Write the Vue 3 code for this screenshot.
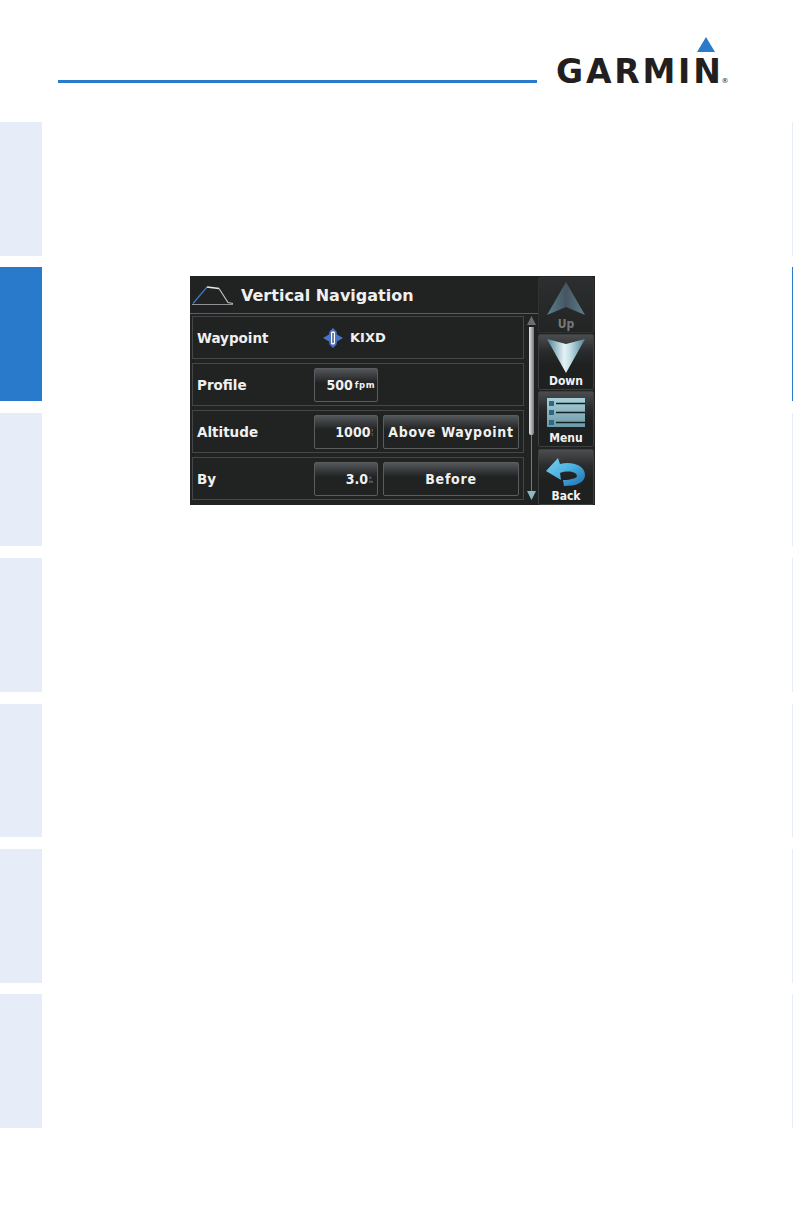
<script setup>
const tabs = [false, true, false, false, false, false, false]
const rows = [
  { label: 'Profile', value: '500', unit: 'fpm' },
  { label: 'Altitude', value: '1000', stack: ['f', 't'], wide: 'Above Waypoint' },
  { label: 'By', value: '3.0', stack: ['n', 'm'], wide: 'Before' }
]
</script>

<template>
  <div class="page">
    <header class="top">
      <div class="rule"></div>
      <div class="logo">
        <svg class="delta" width="18" height="15" viewBox="0 0 18 15"><path d="M9 0 18 15H0Z" fill="#2a7acb" /></svg>
        <div class="wordmark">GARMIN<span class="reg">®</span></div>
      </div>
    </header>
    <div class="body">
      <nav class="tabs left">
        <div v-for="(on, i) in tabs" :key="i" class="tab" :class="{ on }"></div>
      </nav>
      <main class="main">
        <section class="screen">
          <div class="content">
            <div class="title">
              <svg class="profile" width="42" height="24" viewBox="0 0 42 24" fill="none">
                <path d="M0 21.5H41" stroke="#8d9296" stroke-width="1" />
                <path d="M1 20.5 15 4" stroke="#3f79c4" stroke-width="1.2" />
                <path d="M15 4 27 5.5" stroke="#e8e8e8" stroke-width="1.6" />
                <path d="M27 5.5 36 19.5 41 20.5" stroke="#b9c3cc" stroke-width="1.2" />
              </svg>
              <span>Vertical Navigation</span>
            </div>
            <div class="list-wrap">
              <div class="list">
                <div class="row">
                  <span class="label">Waypoint</span>
                  <svg class="wpt" width="20" height="20" viewBox="0 0 20 20">
                    <path d="M10 0 13.5 3.5 14 6.5 20 10 14 13.5 13.5 16.5 10 20 6.5 16.5 6 13.5 0 10 6 6.5 6.5 3.5Z" fill="#4a72c6" />
                    <rect x="8" y="3.5" width="4" height="13" rx="1.4" fill="#fff" />
                    <rect x="9.4" y="5" width="1.2" height="10" fill="#1c2c50" />
                  </svg>
                  <span class="wpt-name">KIXD</span>
                </div>
                <div v-for="r in rows" :key="r.label" class="row">
                  <span class="label">{{ r.label }}</span>
                  <div class="btn num">
                    <span class="digits">{{ r.value }}</span><span v-if="r.unit" class="unit">{{ r.unit }}</span>
                    <span v-if="r.stack" class="stack"><i>{{ r.stack[0] }}</i><i>{{ r.stack[1] }}</i></span>
                  </div>
                  <div v-if="r.wide" class="btn wide">{{ r.wide }}</div>
                </div>
              </div>
              <div class="scroll">
                <svg width="9" height="9" viewBox="0 0 9 9"><path d="M4.5 0 9 9H0Z" fill="#6a6e70" /></svg>
                <div class="thumb"></div>
                <div class="track"></div>
                <svg width="9" height="9" viewBox="0 0 9 9"><path d="M0 0H9L4.5 9Z" fill="#8fb9c2" /></svg>
              </div>
            </div>
          </div>
          <div class="keys">
            <div class="key off">
              <svg width="40" height="36" viewBox="0 0 40 36">
                <defs>
                  <linearGradient id="up" x1="0" x2="1" y1="0" y2="0">
                    <stop offset="0" stop-color="#5d7f8e" /><stop offset=".5" stop-color="#455561" /><stop offset="1" stop-color="#5d7f8e" />
                  </linearGradient>
                </defs>
                <path d="M20 1 39 34 20 26 1 34Z" fill="url(#up)" />
              </svg>
              <span>Up</span>
            </div>
            <div class="key">
              <svg width="40" height="36" viewBox="0 0 40 36">
                <defs>
                  <linearGradient id="down" x1="0" x2="1" y1="0" y2="0">
                    <stop offset="0" stop-color="#4f8496" /><stop offset=".45" stop-color="#e4f2f5" /><stop offset=".6" stop-color="#c5e0e6" /><stop offset="1" stop-color="#4f8496" />
                  </linearGradient>
                </defs>
                <path d="M1 1 20 6 39 1 20 35Z" fill="url(#down)" />
              </svg>
              <span>Down</span>
            </div>
            <div class="key menu">
              <svg width="38" height="29" viewBox="0 0 38 29">
                <defs>
                  <linearGradient id="menu" x1="0" x2="0" y1="0" y2="1">
                    <stop offset="0" stop-color="#a9d0da" /><stop offset="1" stop-color="#6c9aa8" />
                  </linearGradient>
                </defs>
                <rect width="38" height="29" fill="url(#menu)" />
                <rect x="2" y="3" width="5" height="5" fill="#2d6a80" />
                <rect x="2" y="12" width="5" height="5" fill="#2d6a80" />
                <rect x="2" y="22" width="5" height="5" fill="#2d6a80" />
                <path d="M9 5.5H38M9 14.5H38M9 24.5H38" stroke="#12211f" stroke-width="1.6" />
              </svg>
              <span>Menu</span>
            </div>
            <div class="key back">
              <svg width="40" height="29" viewBox="0 0 40 29">
                <defs>
                  <linearGradient id="back" x1="0" x2="1" y1="0" y2="1">
                    <stop offset="0" stop-color="#7fd0ee" /><stop offset=".5" stop-color="#4ab0e0" /><stop offset="1" stop-color="#1f6cab" />
                  </linearGradient>
                </defs>
                <path d="M12 0 0 13 15 22 14 15C22 12 31 14 31 18 31 20 25 22 17 22L18 28C30 28 39 25 39 17 39 7 25 3 14 6Z" fill="url(#back)" />
              </svg>
              <span>Back</span>
            </div>
          </div>
        </section>
      </main>
      <nav class="tabs right">
        <div v-for="(on, i) in tabs" :key="i" class="tab" :class="{ on }"></div>
      </nav>
    </div>
  </div>
</template>

<style>
html, body { margin: 0; background: #fff; }
</style>

<style scoped>
.page { width: 793px; height: 1225px; background: #fff; overflow: hidden; font-family: "DejaVu Sans", sans-serif; }
.top { height: 122px; display: flex; }
.rule { width: 479px; height: 3px; margin: 80px 0 0 58px; background: #2a7acb; }
.logo { width: 175px; margin: 37px 0 0 19px; display: flex; flex-direction: column; }
.delta { margin-left: 141px; }
.wordmark { margin-top: 3px; font: 700 33px/34px "DejaVu Sans", sans-serif; letter-spacing: 2.8px; color: #231f20; white-space: nowrap; }
.reg { font-size: 7px; letter-spacing: 0; font-weight: 400; margin-left: -2px; }
.body { display: flex; height: 1006px; }
.tabs { display: flex; flex-direction: column; justify-content: space-between; flex: none; }
.tabs.left { width: 42px; }
.tabs.right { width: 1px; }
.tab { height: 133.5px; background: #e6ecf8; }
.tab.on { background: #2a7acb; }
.main { flex: 1; padding: 154px 0 0 148px; }
.screen { width: 405px; height: 229px; background: #212222; display: flex; }
.content { width: 348px; flex: none; }
.title { height: 36px; margin-top: 1px; border-bottom: 1px solid #5c5e5f; display: flex; align-items: center; color: #f0f0f0; font-size: 16px; font-weight: 700; }
.profile { margin: 0 7px 0 2px; }
.list-wrap { display: flex; padding-top: 2px; }
.list { width: 332px; margin-left: 2px; display: flex; flex-direction: column; gap: 4px; }
.row { height: 43px; box-sizing: border-box; border: 1px solid #454647; display: flex; align-items: center; padding-left: 4px; color: #f0f0f0; font-size: 13.5px; font-weight: 700; }
.label { width: 117px; flex: none; }
.wpt { margin-left: 9px; }
.wpt-name { margin-left: 7px; font-size: 13px; }
.btn { height: 34px; box-sizing: border-box; border: 1px solid #5a5c5d; border-radius: 2px; background: linear-gradient(#53575a 0, #2e3031 10px, #212222 14px); display: flex; align-items: center; }
.num { width: 64px; justify-content: flex-end; padding-right: 2px; }
.digits { font-family: "DejaVu Sans Condensed", "DejaVu Sans", sans-serif; font-stretch: condensed; font-size: 14px; }
.wide { width: 136px; margin-left: 5px; justify-content: center; font-family: "DejaVu Sans Condensed", "DejaVu Sans", sans-serif; font-stretch: condensed; font-size: 14px; letter-spacing: .75px; }
.unit { font-size: 8.5px; margin-left: 2px; letter-spacing: .5px; }
.stack { display: inline-flex; flex-direction: column; margin: 2px 2px 0 1px; font-size: 4px; line-height: 4px; font-weight: 400; color: #b5b7b8; }
.stack i { font-style: normal; }
.scroll { width: 9px; margin-left: 3px; display: flex; flex-direction: column; align-items: center; }
.thumb { width: 5px; height: 108px; margin-top: 2px; border-radius: 0 0 2px 2px; background: linear-gradient(90deg, #e4e4e4, #a9acae 55%, #75787a); }
.track { width: 1px; height: 56px; background: #77797a; }
.keys { width: 56px; padding-top: 1px; display: flex; flex-direction: column; gap: 1px; }
.key { height: 56px; box-sizing: border-box; border-radius: 2px; border: 1px solid #3d3f40; background: linear-gradient(#4a4d4f 0, #2a2b2c 16px, #1f2020 30px); display: flex; flex-direction: column; align-items: center; justify-content: space-between; padding: 3px 0 1px; color: #f2f2f2; font-family: "DejaVu Sans Condensed", "DejaVu Sans", sans-serif; font-stretch: condensed; font-size: 12px; line-height: 13px; font-weight: 700; }
.key.off { background: linear-gradient(#2c2e2f, #232424); border-color: #303233; color: #75787a; }
.key.menu { padding-top: 6px; }
.key.back { margin-top: 1px; padding-top: 8px; }
</style>
